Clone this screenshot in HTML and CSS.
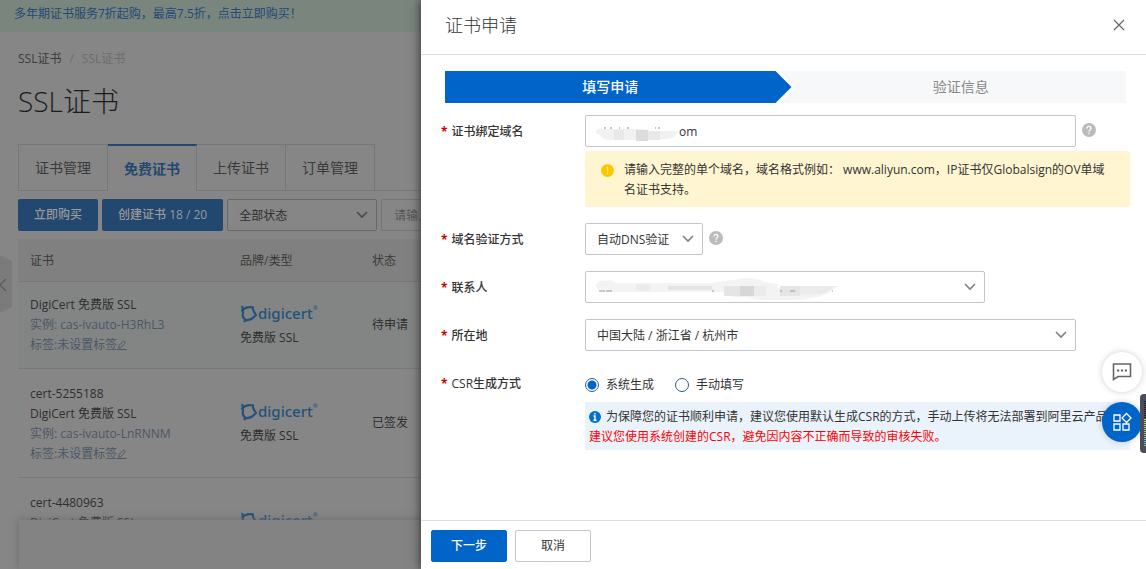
FILE: index.html
```html
<!DOCTYPE html>
<html lang="zh-CN">
<head>
<meta charset="utf-8">
<title>SSL证书</title>
<link rel="stylesheet" href="styles.css">
</head>
<body>
<svg class="defs" aria-hidden="true">
  <symbol id="chevron" viewBox="0 0 12 8"><path d="M1 1l5 5 5-5" fill="none" stroke="currentColor" stroke-width="1.6"/></symbol>
  <symbol id="pencil" viewBox="0 0 10 10"><path d="M1.500 8l.5-2.500L6 1.500q1-.8 1.800 0t0 1.800L4 7.500zM0 9.500h9.500" fill="none" stroke="currentColor"/></symbol>
  <symbol id="ring" viewBox="0 0 18 18"><path d="M2.500 1c-.5 3 1 4 .3 8-.6 3 .7 4.500 3.200 6.500M1.500 6.500C4 2.500 8 1.500 14 2.500M12.500 2c0 3 1.500 5 4 9M4 17c1-2.500 5-1.500 8-3.500 2-1.500 2.500-2.500 4-3" fill="none" stroke="currentColor" stroke-width="2.200"/></symbol>
  <symbol id="help" viewBox="0 0 14 14"><circle cx="7" cy="7" r="7" fill="#bbb"/><path d="M5 5.500c0-2.700 4-2.700 4-.2C9 6.800 7 6.700 7 8.500M7 9.800v1.400" fill="none" stroke="#fff" stroke-width="1.300"/></symbol>
</svg>

<div class="page">
  <div class="promo"><a href="#">多年期证书服务7折起购，最高7.5折，点击立即购买！</a></div>
  <main class="content">
    <nav class="crumbs"><a href="#">SSL证书</a><span>/</span><span>SSL证书</span></nav>
    <h1>SSL证书</h1>
    <div class="tabs">
      <button class="tab">证书管理</button>
      <button class="tab tab-active">免费证书</button>
      <button class="tab">上传证书</button>
      <button class="tab">订单管理</button>
    </div>
    <div class="toolbar">
      <button class="buy">立即购买</button>
      <button class="buy">创建证书 18 / 20</button>
      <div class="select filter">
        <select aria-label="状态"><option>全部状态</option></select>
        <svg class="chevron"><use href="#chevron"/></svg>
      </div>
      <input class="search" aria-label="搜索" placeholder="请输入域名">
    </div>
    <table>
      <thead><tr><th class="col-cert">证书</th><th class="col-brand">品牌/类型</th><th>状态</th></tr></thead>
      <tbody>
        <tr class="hovered">
          <td>DigiCert 免费版 SSL<div class="muted">实例: cas-ivauto-H3RhL3</div><a class="muted" href="#">标签:未设置标签<svg class="pencil"><use href="#pencil"/></svg></a></td>
          <td><div class="logo"><svg class="ring"><use href="#ring"/></svg>digicert<sup>®</sup></div>免费版 SSL</td>
          <td>待申请</td>
        </tr>
        <tr>
          <td><div class="name">cert-5255188</div>DigiCert 免费版 SSL<div class="muted">实例: cas-ivauto-LnRNNM</div><a class="muted" href="#">标签:未设置标签<svg class="pencil"><use href="#pencil"/></svg></a></td>
          <td><div class="logo"><svg class="ring"><use href="#ring"/></svg>digicert<sup>®</sup></div>免费版 SSL</td>
          <td>已签发</td>
        </tr>
        <tr>
          <td><div class="name">cert-4480963</div>DigiCert 免费版 SSL<div class="muted">&nbsp;</div><div class="muted">&nbsp;</div></td>
          <td><div class="logo"><svg class="ring"><use href="#ring"/></svg>digicert<sup>®</sup></div>免费版 SSL</td>
          <td></td>
        </tr>
      </tbody>
    </table>
  </main>
  <div class="pager"></div>
  <button class="collapse" aria-label="收起"><svg viewBox="0 0 12 58"><path class="collapse-bg" d="M0 0l12 6v46L0 58z"/><path class="collapse-arrow" d="M6 24l-6 6 6 6"/></svg></button>
</div>

<section class="drawer" aria-labelledby="drawer-title">
  <header class="drawer-head">
    <h2 id="drawer-title">证书申请</h2>
    <button class="close" aria-label="关闭"><svg viewBox="0 0 12 12"><path d="M1 1l10 10M11 1L1 11"/></svg></button>
  </header>
  <div class="drawer-body">
    <div class="steps"><div class="step step-current">填写申请</div><div class="step step-next">验证信息</div></div>
    <form class="form">
      <div class="row">
        <label for="domain">证书绑定域名</label>
        <div class="field">
          <div class="line">
            <div class="wide masked">
              <input id="domain" class="domain" value="om">
              <svg class="mask mask-domain" viewBox="0 0 86 16"><path d="M0 4q2-4 8-2h40l6 2h28q-1 7-12 8l-24 1H14Q4 12 4 8 0 7 0 4z" fill="#f1f1f1"/><path d="M40 3h12v11H40z" fill="#dcdcdc"/><path d="M52 4h12v9H52zM18 3h10v10H18z" fill="#e8e8e8"/><path d="M8 1h2M14 1h2M23 1h1M31 1h2M59 1h1M62 1h2" stroke="#888"/></svg>
            </div>
            <svg class="help"><use href="#help"/></svg>
          </div>
          <div class="warning">
            <svg class="warn-icon" viewBox="0 0 13 13"><circle cx="6.500" cy="6.500" r="6.500" fill="#fac800"/><path d="M6.500 3v4.500M6.500 8.500V10" stroke="#fff3b0" stroke-width="1.200"/></svg>
            <p>请输入完整的单个域名，域名格式例如： www.aliyun.com，IP证书仅Globalsign的OV单域名证书支持。</p>
          </div>
        </div>
      </div>
      <div class="row">
        <label for="verify">域名验证方式</label>
        <div class="field line">
          <div class="select verify"><select id="verify"><option>自动DNS验证</option></select><svg class="chevron"><use href="#chevron"/></svg></div>
          <svg class="help"><use href="#help"/></svg>
        </div>
      </div>
      <div class="row">
        <label for="contact">联系人</label>
        <div class="field">
          <div class="select contact masked">
            <select id="contact"><option></option></select><svg class="chevron"><use href="#chevron"/></svg>
            <svg class="mask mask-contact" viewBox="0 0 246 26"><path d="M0 11q2-6 10-4 6-2 10 2h94l30-4q14-3 24 3l14 2v4h56q-2 6-22 10-38 6-68-1-18 1-18-5H12Q0 18 0 11z" fill="#f3f3f3"/><path d="M72 12h44v4H72zM128 12h16v10h-16zM184 12h20v10h-20z" fill="#e5e5e5"/><path d="M144 12h14v10h-14z" fill="#d7d7d7"/><path d="M158 12h12v10h-12zM204 12h38l-16 8h-22zM40 10h14v7H40z" fill="#ebebeb"/><path d="M3 17h6M10 17h6M116 17h2M184 17h2M194 17h5M236 17h1" stroke="#999"/></svg>
          </div>
        </div>
      </div>
      <div class="row">
        <label for="region">所在地</label>
        <div class="field"><div class="select wide"><select id="region"><option>中国大陆 / 浙江省 / 杭州市</option></select><svg class="chevron"><use href="#chevron"/></svg></div></div>
      </div>
      <div class="row">
        <span class="label" id="csr">CSR生成方式</span>
        <div class="field">
          <div class="radios" role="radiogroup" aria-labelledby="csr">
            <label><input type="radio" name="csr" checked>系统生成</label>
            <label><input type="radio" name="csr">手动填写</label>
          </div>
          <div class="info"><div><svg class="info-icon" viewBox="0 0 12 12"><circle cx="6" cy="6" r="6" fill="#0070cc"/><path d="M6 2v1.600M4.500 5H6v4M4.500 9.200h3" fill="none" stroke="#fff" stroke-width="1.400"/></svg>为保障您的证书顺利申请，建议您使用默认生成CSR的方式，手动上传将无法部署到阿里云产品</div><div class="danger">建议您使用系统创建的CSR，避免因内容不正确而导致的审核失败。</div></div>
        </div>
      </div>
    </form>
  </div>
  <footer class="drawer-foot"><button class="btn btn-primary">下一步</button><button class="btn">取消</button></footer>
</section>

<div class="floats">
  <button class="float" aria-label="咨询"><svg viewBox="0 0 20 20"><path d="M1.500 2h17v12.500H6L1.500 17.500z" fill="none" stroke="#666" stroke-width="1.600"/><path d="M5 8.500h2.200M8.900 8.500h2.200M12.800 8.500H15" stroke="#666" stroke-width="2.200"/></svg></button>
  <button class="float float-blue" aria-label="应用"><svg viewBox="0 0 20 20"><path d="M2 3h6v6H2zM2 12h6v6H2zM11 12h6v6h-6zM14.500 1.500L19 6l-4.500 4.500L10 6z" fill="none" stroke="#fff" stroke-width="1.300"/></svg></button>
</div>
<div class="meter"><span></span></div>
</body>
</html>
```
FILE: styles.css
```css
* { box-sizing: border-box; }
body {
  margin: 0;
  height: 100vh;
  overflow: hidden;
  font: 12px/20px "Open Sans", "Noto Sans CJK SC", sans-serif;
  color: #333;
}
button, input, select { font: inherit; color: inherit; margin: 0; }
button { padding: 0; border: 0; background: none; white-space: nowrap; }
a { color: inherit; text-decoration: none; }
h1, h2 { margin: 0; font-weight: 300; }
p { margin: 0; }
svg { display: block; }
.defs { position: absolute; width: 0; height: 0; }

.page { position: relative; height: 100vh; overflow: hidden; background: #868686; color: #2e2e2e; }
.promo { height: 32px; padding: 4px 14px; background: #7a857e; color: #1f4a75; }
.content { padding: 16px 0 0 18px; }
.crumbs { display: flex; gap: 8px; line-height: 22px; color: #6c6c6c; }
.crumbs a { color: #3c3c3c; }
h1 { margin: 12px 0 24px; font-size: 28px; line-height: 38px; color: #1c1c1c; }

.tabs { display: flex; border-bottom: 1px solid #777; }
.tab { height: 46px; padding: 0 16px; border: 1px solid #777; border-width: 1px 1px 0 0; font-size: 14px; color: #3a3a3a; }
.tab:first-child { border-left-width: 1px; }
.tab-active { border-top: 2px solid #22486f; margin-bottom: -1px; height: 47px; background: #868686; color: #22486f; font-weight: 700; }

.toolbar { display: flex; gap: 4px; margin: 8px 0; }
.buy { height: 32px; padding: 0 16px; border-radius: 2px; background: #22486f; color: #999; font-weight: 500; }
.search { width: 200px; height: 32px; padding: 0 12px; border: 1px solid #747474; border-radius: 2px; background: none; }
.search::placeholder { color: #555; opacity: 1; }

.select { position: relative; }
.select select { display: block; width: 100%; height: 32px; padding: 1px 32px 0 11px; border: 1px solid #c0c6cc; border-radius: 2px; background: none; appearance: none; }
.chevron { position: absolute; top: 12px; right: 9px; width: 12px; height: 8px; color: #808080; pointer-events: none; }
.filter { width: 150px; }
.filter select { border-color: #66686b; }
.filter .chevron { color: #4a4a4a; }

table { width: 100%; border-collapse: collapse; table-layout: fixed; }
th { height: 42px; padding: 2px 12px 0; background: #808080; font-weight: 400; text-align: left; color: #3a3a3a; }
td { padding: 13px 12px; }
tr { border-bottom: 1px solid #787878; }
.col-cert { width: 210px; }
.col-brand { width: 132px; }
.hovered { background: #828584; }
.name { margin-top: 2px; }
.muted { color: #4b5766; }
a.muted { display: flex; align-items: center; }
.pencil { width: 10px; height: 10px; }
.logo { display: flex; align-items: center; height: 26px; padding-bottom: 4px; font: 500 15px/22px "Noto Sans", sans-serif; color: #225279; }
.logo sup { align-self: flex-start; font-size: 6px; font-weight: 400; line-height: 12px; }
.ring { width: 18px; height: 18px; margin-top: 3px; }

.pager { position: absolute; left: 19px; right: 0; bottom: 0; height: 49px; background: #838383; box-shadow: 0 0 8px #6b6b6b; }
.collapse { position: absolute; left: 0; top: 255px; width: 12px; height: 58px; }
.collapse-bg { fill: #7b7b7b; }
.collapse-arrow { fill: none; stroke: #5e5e5e; stroke-width: 1.5; }

.drawer { position: absolute; top: 0; right: 0; bottom: 0; left: 421px; display: flex; flex-direction: column; background: #fff; box-shadow: 0 0 10px rgba(0, 0, 0, .7); }
.drawer-head { display: flex; align-items: center; justify-content: space-between; height: 55px; padding: 0 21px 4px 24px; border-bottom: 1px solid #dedede; }
h2 { font-size: 18px; line-height: 28px; }
.close { width: 12px; height: 12px; }
.close svg { width: 12px; fill: none; stroke: #666; stroke-width: 1.2; }
.drawer-body { flex: 1; min-height: 0; padding: 16px 16px 0 20px; }
.steps { display: flex; margin: 0 4px 12px; font-size: 14px; line-height: 32px; text-align: center; }
.step { flex: 1; }
.step-current { padding-right: 16px; background: #0064c8; color: #fff; font-weight: 500; clip-path: polygon(0 0, calc(100% - 16px) 0, 100% 50%, calc(100% - 16px) 100%, 0 100%); }
.step-next { margin-left: -12px; padding-left: 16px; background: #f7f8fa; color: #888; clip-path: polygon(0 0, 100% 0, 100% 100%, 0 100%, 16px 50%); }

.form { display: grid; gap: 16px; }
.row { display: grid; grid-template-columns: 144px 1fr; align-items: start; }
.row > label, .label { margin-bottom: -2px; line-height: 34px; font-weight: 500; }
.row > label::before, .label::before { content: "*"; margin-right: 4px; color: #c00; font-weight: 700; }
.field { min-width: 0; }
.line { display: flex; gap: 6px; }
.wide { width: 90%; }
.masked { position: relative; }
.domain { display: block; width: 100%; height: 32px; padding: 1px 12px 0 93px; border: 1px solid #c0c6cc; border-radius: 2px; }
.mask { position: absolute; left: 11px; pointer-events: none; }
.mask-domain { top: 12px; width: 86px; height: 16px; }
.mask-contact { top: 3px; width: 246px; height: 26px; }
.help { width: 14px; height: 14px; margin-top: 8px; }
.verify { width: 118px; }
.contact { width: 400px; }
.warning { display: flex; gap: 10px; margin-top: 4px; padding: 9px 24px 7px 16px; border-radius: 2px; background: #fff5d1; }
.warn-icon { flex: none; width: 13px; height: 13px; margin-top: 4px; }
.radios { display: flex; gap: 21px; height: 35px; padding-top: 1px; align-items: center; }
.radios label { display: flex; align-items: center; gap: 7px; }
.radios input { appearance: none; width: 14px; height: 14px; border: 1px solid #2a5a94; border-radius: 50%; }
.radios input:checked { background: radial-gradient(circle, #0064c8 4px, #fff 5px); }
.info { padding: 5px 4px 3px; overflow: hidden; background: #eaf3fb; white-space: nowrap; }
.info-icon { display: inline-block; width: 12px; height: 12px; margin-right: 5px; vertical-align: -2px; }
.danger { color: #f00; }

.drawer-foot { display: flex; gap: 8px; padding: 9px 10px 7px; border-top: 1px solid #dedede; }
.btn { width: 76px; height: 32px; border: 1px solid #c0c6cc; border-radius: 2px; }
.btn-primary { border-color: #0064c8; background: #0064c8; color: #fff; font-weight: 500; }

.floats { position: fixed; right: 4px; top: 352px; display: grid; gap: 10px; }
.float { display: grid; place-items: center; width: 40px; height: 40px; border-radius: 50%; background: #fff; box-shadow: 0 0 6px rgba(0, 0, 0, .2); }
.float svg { width: 20px; height: 20px; }
.float-blue { background: #0064c8; }
.meter { position: fixed; right: 0; top: 394px; width: 6px; height: 59px; padding: 7px 0 7px 4px; border-radius: 4px 0 0 4px; background: #4b4d5a; }
.meter span { display: block; height: 45px; background: repeating-linear-gradient(transparent 0 1px, #4b4d5a 1px 2px), linear-gradient(#22242e 40%, #d8c860 40%, #8fc878 65%, #50c8c0); }
```
